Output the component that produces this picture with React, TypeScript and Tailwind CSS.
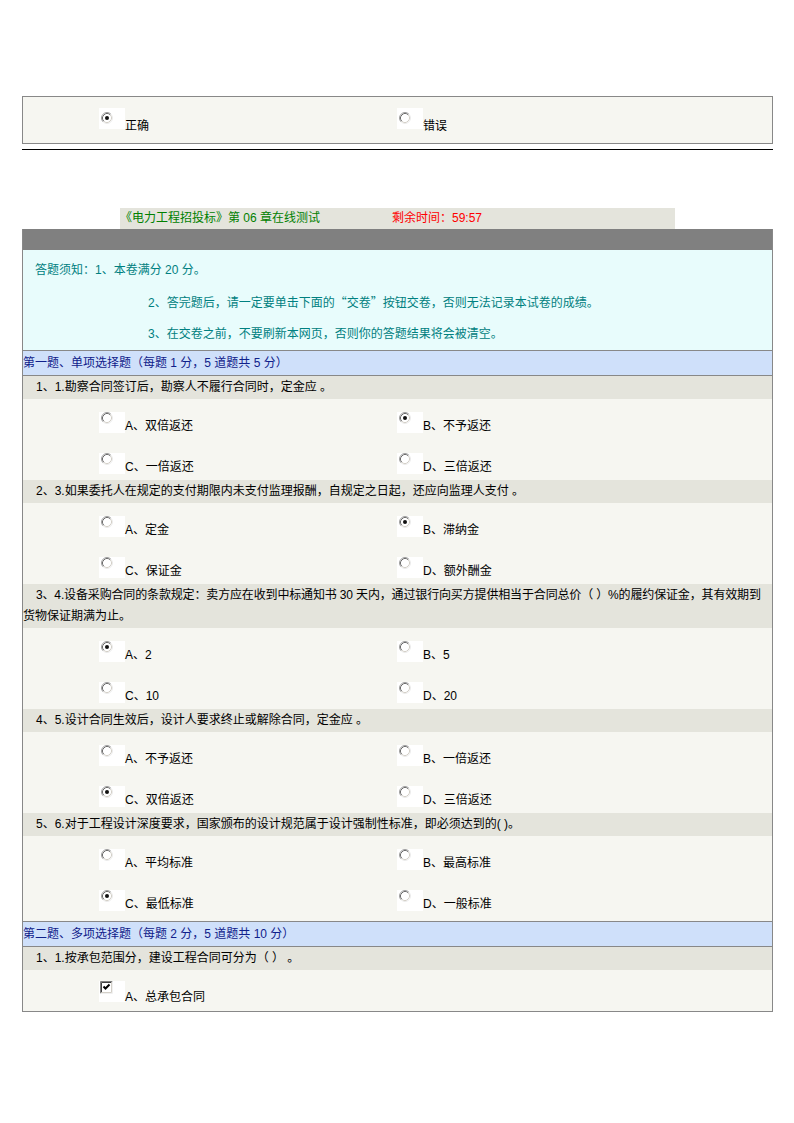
import React from "react";

type Opt = { label: string; checked?: boolean };

const Radio: React.FC<{ checked?: boolean }> = ({ checked }) => (
  <div className="w-[26px] h-[21px] bg-white shrink-0">
    <svg width="12" height="12" viewBox="0 0 12 12" className="ml-[2px] mt-[4px]">
      <circle cx="6" cy="6" r="5" fill="#fff" />
      <path d="M2.11 9.89 A5.5 5.5 0 0 1 9.89 2.11" fill="none" stroke="#a0a0a0" />
      <path d="M9.89 2.11 A5.5 5.5 0 0 1 2.11 9.89" fill="none" stroke="#ececec" />
      <path d="M2.82 9.18 A4.5 4.5 0 0 1 9.18 2.82" fill="none" stroke="#6c6c6c" />
      <path d="M9.18 2.82 A4.5 4.5 0 0 1 2.82 9.18" fill="none" stroke="#d4d0c8" />
      {checked && <circle cx="6" cy="6" r="2" fill="#111" />}
    </svg>
  </div>
);

const Check: React.FC = () => (
  <div className="w-[26px] h-[21px] bg-white shrink-0">
    <svg width="13" height="13" viewBox="0 0 13 13" className="ml-[1px] mt-[2px]">
      <rect x="0" y="0" width="13" height="13" fill="#fff" />
      <path d="M0.5 12.5 V0.5 H12.5" fill="none" stroke="#808080" />
      <path d="M0.5 12.5 H12.5 V0.5" fill="none" stroke="#f0f0f0" />
      <path d="M1.5 11.5 V1.5 H11.5" fill="none" stroke="#404040" />
      <path d="M1.5 11.5 H11.5 V1.5" fill="none" stroke="#d4d0c8" />
      <path d="M3.5 5.5 L5.5 7.5 L9.5 3.5" fill="none" stroke="#000" strokeWidth="2" />
    </svg>
  </div>
);

const Choice: React.FC<{ opt: Opt; multi?: boolean; width?: string }> = ({ opt, multi, width }) => (
  <div className={`flex items-start ${width ?? ""}`}>
    <div className="mt-[9px]">{multi ? <Check /> : <Radio checked={opt.checked} />}</div>
    <span className="mt-[21px] leading-[12px] text-black">{opt.label}</span>
  </div>
);

const OptionRow: React.FC<{ a: Opt; b?: Opt; multi?: boolean; h: string }> = ({ a, b, multi, h }) => (
  <div className={`flex pl-[76px] ${h}`}>
    <Choice opt={a} multi={multi} width="w-[298px]" />
    {b && <Choice opt={b} multi={multi} />}
  </div>
);

const Question: React.FC<{ title: React.ReactNode; opts: Opt[]; last?: boolean }> = ({ title, opts, last }) => (
  <div>
    <div className="bg-[#e4e4dc] leading-[21px] py-px indent-[13px] text-black">{title}</div>
    <div className="bg-[#f6f6f1]">
      <OptionRow a={opts[0]} b={opts[1]} h="h-[41px]" />
      <OptionRow a={opts[2]} b={opts[3]} h={last ? "h-[44px]" : "h-[40px]"} />
    </div>
  </div>
);

const single = [
  {
    title: "1、1.勘察合同签订后，勘察人不履行合同时，定金应 。",
    opts: [
      { label: "A、双倍返还" },
      { label: "B、不予返还", checked: true },
      { label: "C、一倍返还" },
      { label: "D、三倍返还" },
    ],
  },
  {
    title: "2、3.如果委托人在规定的支付期限内未支付监理报酬，自规定之日起，还应向监理人支付 。",
    opts: [
      { label: "A、定金" },
      { label: "B、滞纳金", checked: true },
      { label: "C、保证金" },
      { label: "D、额外酬金" },
    ],
  },
  {
    title: (
      <>
        <span className="whitespace-nowrap tracking-[-0.15px]">
          3、4.设备采购合同的条款规定：卖方应在收到中标通知书 30 天内，通过银行向买方提供相当于合同总价（ ）%的履约保证金，其有效期到
        </span>
        <br />
        货物保证期满为止。
      </>
    ),
    opts: [
      { label: "A、2", checked: true },
      { label: "B、5" },
      { label: "C、10" },
      { label: "D、20" },
    ],
  },
  {
    title: "4、5.设计合同生效后，设计人要求终止或解除合同，定金应 。",
    opts: [
      { label: "A、不予返还" },
      { label: "B、一倍返还" },
      { label: "C、双倍返还", checked: true },
      { label: "D、三倍返还" },
    ],
  },
  {
    title: "5、6.对于工程设计深度要求，国家颁布的设计规范属于设计强制性标准，即必须达到的( )。",
    opts: [
      { label: "A、平均标准" },
      { label: "B、最高标准" },
      { label: "C、最低标准", checked: true },
      { label: "D、一般标准" },
    ],
  },
];

export default function App() {
  return (
    <div className="min-h-[1123px] bg-white pl-[22px] pt-[96px] text-[12px] font-['Liberation_Sans','Noto_Sans_CJK_SC',sans-serif]">
      {/* 判断题选项 */}
      <div className="w-[751px] h-[48px] border border-[#888888] bg-[#f6f6f1] flex pl-[76px] pt-[11px]">
        <div className="flex items-start w-[298px]">
          <Radio checked />
          <span className="mt-[12px] leading-[12px]">正确</span>
        </div>
        <div className="flex items-start">
          <Radio />
          <span className="mt-[12px] leading-[12px]">错误</span>
        </div>
      </div>
      <div className="w-[751px] h-px bg-black mt-[5px]" />

      {/* 标题 */}
      <div className="ml-[98px] w-[555px] h-[21px] mt-[58px] bg-[#e4e4dc] flex items-center leading-[21px]">
        <span className="w-[272px] text-[#008000]">《电力工程招投标》第 06 章在线测试</span>
        <span className="text-[#ff0000]">剩余时间：59:57</span>
      </div>

      <div className="w-[751px] border-x border-b border-[#888888]">
        <div className="h-[21px] bg-[#808080]" />
        {/* 答题须知 */}
        <div className="bg-[#e8fcfc] text-[#008080] leading-[31px] pt-[5px] border-b border-[#888888]">
          <div className="pl-[12px]">答题须知：1、本卷满分 20 分。</div>
          <div className="pl-[125px]">
            2、答完题后，请一定要单击下面的
            <span className="font-['Noto_Sans_CJK_SC',sans-serif]">“交卷”</span>
            按钮交卷，否则无法记录本试卷的成绩。
          </div>
          <div className="pl-[125px]">3、在交卷之前，不要刷新本网页，否则你的答题结果将会被清空。</div>
        </div>

        <div className="h-[25px] bg-[#cfe0fa] text-[#10208a] leading-[24px] border-b border-[#888888]">
          第一题、单项选择题（每题 1 分，5 道题共 5 分）
        </div>
        {single.map((q, i) => (
          <Question key={i} title={q.title} opts={q.opts} last={i === single.length - 1} />
        ))}

        <div className="h-[26px] bg-[#cfe0fa] text-[#10208a] leading-[24px] border-y border-[#888888]">
          第二题、多项选择题（每题 2 分，5 道题共 10 分）
        </div>
        <div className="bg-[#e4e4dc] leading-[21px] py-px indent-[13px] text-black">
          1、1.按承包范围分，建设工程合同可分为（ ） 。
        </div>
        <div className="bg-[#f6f6f1]">
          <OptionRow a={{ label: "A、总承包合同" }} multi h="h-[41px]" />
        </div>
      </div>
    </div>
  );
}
